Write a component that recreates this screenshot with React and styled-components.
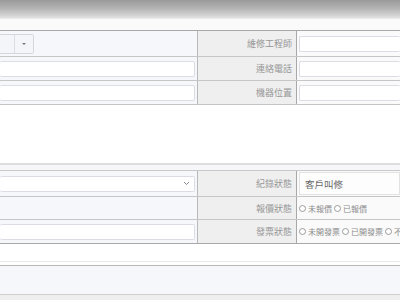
import React from "react";
import styled, { createGlobalStyle } from "styled-components";

const Global = createGlobalStyle`
  html, body { margin: 0; padding: 0; background: #fff; }
  body { font-family: "Noto Sans CJK TC", "Noto Sans", sans-serif; width: 400px; height: 300px; overflow: hidden; }
`;

const Page = styled.div`
  width: 400px;
  height: 300px;
  overflow: hidden;
  display: flex;
  flex-direction: column;
`;

const Header = styled.div`
  height: 19px;
  flex: none;
  background: linear-gradient(#9a9a9a, #b4b4b4 45%, #d6d6d6 85%, #eeeeee);
`;

const Strip = styled.div`
  flex: none;
  height: ${(p) => p.$h}px;
  background: ${(p) => p.$bg || "#fafafa"};
  border-bottom: ${(p) => (p.$line ? `1px solid ${p.$line}` : "none")};
`;

const Table = styled.div`
  flex: none;
  border-top: 1px solid ${(p) => p.$top || "#a9a9a9"};
  border-bottom: 1px solid ${(p) => p.$bottom || "#c4c4c4"};
  display: flex;
  flex-direction: column;
`;

const Row = styled.div`
  display: grid;
  grid-template-columns: 198px 99px 1fr;
  height: ${(p) => p.$h}px;
  border-top: ${(p) => (p.$first ? "none" : "1px solid #c6c6c6")};
`;

const LeftCell = styled.div`
  background: #f6f7fb;
  border-right: 1px solid #b9b9b9;
  display: flex;
  align-items: center;
  padding-right: 2px;
`;

const LabelCell = styled.div`
  background: #efefef;
  border-right: 1px solid #a8a8a8;
  display: flex;
  align-items: center;
  justify-content: flex-end;
  padding-right: 4px;
  color: #979797;
  font-size: 9px;
  white-space: nowrap;
`;

const ValueCell = styled.div`
  background: #fafafa;
  display: flex;
  align-items: center;
  padding-left: 2px;
  overflow: hidden;
  white-space: nowrap;
`;

const Input = styled.div`
  height: 16px;
  box-sizing: border-box;
  flex: 1;
  background: #fff;
  border: 1px solid #dcdde3;
  border-left: ${(p) => (p.$open ? "none" : "1px solid #dcdde3")};
  border-right: ${(p) => (p.$openRight ? "none" : "1px solid #dcdde3")};
  border-radius: 2px;
  display: flex;
  align-items: center;
  justify-content: flex-end;
  padding-right: 4px;
`;

const BtnGroup = styled.div`
  display: flex;
  height: 20px;
  box-sizing: border-box;
  border: 1px solid #d6d7dd;
  border-left: none;
  border-radius: 0 2px 2px 0;
  background: #f4f5f8;
`;

const BtnPart = styled.div`
  width: ${(p) => p.$w}px;
  display: flex;
  align-items: center;
  justify-content: center;
  border-left: ${(p) => (p.$sep ? "1px solid #dcdde2" : "none")};
`;

const Caret = styled.span`
  width: 0;
  height: 0;
  border-left: 2px solid transparent;
  border-right: 2px solid transparent;
  border-top: 2px solid #777;
`;

const TextArea = styled.div`
  flex: none;
  height: 58px;
  background: #fff;
  border-bottom: 2px solid #dedede;
`;

const StatusBox = styled.div`
  flex: 1;
  align-self: stretch;
  margin: 1px 0;
  box-sizing: border-box;
  border: 1px solid #e2e2e2;
  background: #fdfdfd;
  display: flex;
  align-items: center;
  padding-left: 5px;
  color: #666;
  font-size: 9.5px;
`;

const Radio = styled.span`
  display: inline-flex;
  align-items: center;
  color: #8c8c8c;
  font-size: 8px;
  margin-right: 2px;
  &::before {
    content: "";
    width: 5px;
    height: 5px;
    border: 1px solid #9a9a9a;
    border-radius: 50%;
    margin-right: 2px;
    background: #fff;
  }
`;

const Chevron = () => (
  <svg width="7" height="5" viewBox="0 0 7 5">
    <path d="M1 1 L3.5 3.5 L6 1" fill="none" stroke="#888" strokeWidth="1" />
  </svg>
);

const Bottom = styled.div`
  flex: none;
  height: 28px;
  background: #f6f7fb;
  border-top: 1px solid #b8b8b8;
  border-bottom: 1px solid #cfcfcf;
`;

export default function App() {
  return (
    <Page>
      <Global />
      <Header />
      <Strip $h={11} $bg="#fafafa" />
      <Table>
        <Row $h={25} $first>
          <LeftCell>
            <BtnGroup>
              <BtnPart $w={14} />
              <BtnPart $w={18} $sep>
                <Caret />
              </BtnPart>
            </BtnGroup>
          </LeftCell>
          <LabelCell>維修工程師</LabelCell>
          <ValueCell>
            <Input $openRight />
          </ValueCell>
        </Row>
        <Row $h={23}>
          <LeftCell>
            <Input $open />
          </LeftCell>
          <LabelCell>連絡電話</LabelCell>
          <ValueCell>
            <Input $openRight />
          </ValueCell>
        </Row>
        <Row $h={23}>
          <LeftCell>
            <Input $open />
          </LeftCell>
          <LabelCell>機器位置</LabelCell>
          <ValueCell>
            <Input $openRight />
          </ValueCell>
        </Row>
      </Table>
      <TextArea />
      <Strip $h={5} $bg="#f7f7f9" />
      <Table $top="#c8c8c8" $bottom="#a9a9a9">
        <Row $h={25} $first>
          <LeftCell>
            <Input $open>
              <Chevron />
            </Input>
          </LeftCell>
          <LabelCell>紀錄狀態</LabelCell>
          <ValueCell>
            <StatusBox>客戶叫修</StatusBox>
          </ValueCell>
        </Row>
        <Row $h={22}>
          <LeftCell />
          <LabelCell>報價狀態</LabelCell>
          <ValueCell>
            <Radio>未報價</Radio>
            <Radio>已報價</Radio>
          </ValueCell>
        </Row>
        <Row $h={23}>
          <LeftCell>
            <Input $open />
          </LeftCell>
          <LabelCell>發票狀態</LabelCell>
          <ValueCell>
            <Radio>未開發票</Radio>
            <Radio>已開發票</Radio>
            <Radio>不開發票</Radio>
          </ValueCell>
        </Row>
      </Table>
      <Strip $h={17} $bg="#fff" $line="#e8e8e8" />
      <Strip $h={3} $bg="#fff" />
      <Bottom />
      <Strip $h={6} $bg="#eeeeee" />
    </Page>
  );
}
